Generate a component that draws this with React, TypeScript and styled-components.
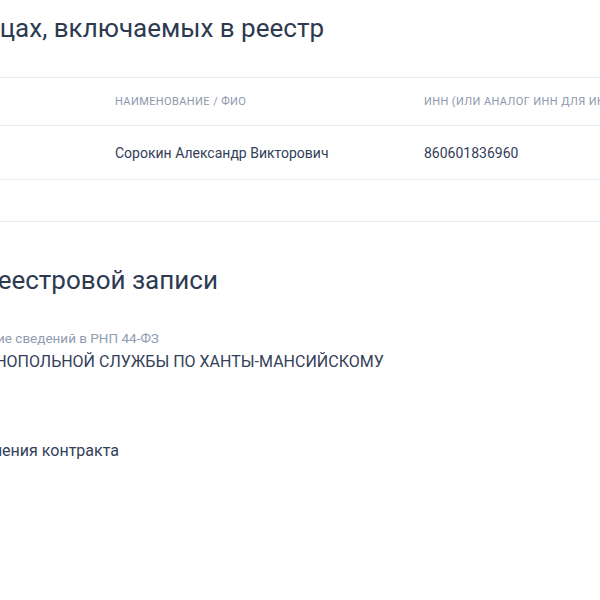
import React from "react";
import styled, { createGlobalStyle } from "styled-components";

const Global = createGlobalStyle`
  html, body { margin: 0; padding: 0; background: #ffffff; }
  body { overflow: hidden; width: 600px; height: 600px; font-family: Roboto, "Noto Sans", sans-serif; color: #334059; }
`;

const Viewport = styled.div`
  width: 600px;
  height: 600px;
  overflow: hidden;
`;

const Content = styled.main`
  width: 1240px;
  margin-left: -218px;
`;

const Section = styled.section<{ $divider?: boolean; $pt: number }>`
  padding-top: ${(p) => p.$pt}px;
  padding-bottom: ${(p) => (p.$divider ? "41px" : "0")};
  border-bottom: ${(p) => (p.$divider ? "1px solid #e8ebf2" : "none")};
`;

const Title = styled.h2<{ $mb: number }>`
  margin: 0 0 ${(p) => p.$mb}px;
  font-size: 26px;
  line-height: 32px;
  font-weight: 400;
  color: #2d3a50;
  white-space: nowrap;
`;

const Table = styled.div`
  border-top: 1px solid #e8ebf2;
`;

const Row = styled.div<{ $head?: boolean }>`
  display: grid;
  grid-template-columns: repeat(4, 309px);
  height: ${(p) => (p.$head ? "47px" : "53px")};
  align-items: center;
  border-bottom: 1px solid #e8ebf2;
`;

const HeadCell = styled.div`
  padding: 0 24px;
  font-size: 11px;
  line-height: 16px;
  letter-spacing: 0.4px;
  text-transform: uppercase;
  color: #8d98ad;
  white-space: nowrap;
`;

const Cell = styled.div`
  padding: 0 24px;
  font-size: 14px;
  line-height: 20px;
  color: #334059;
  white-space: nowrap;
`;

const Field = styled.div<{ $mt: number }>`
  margin-top: ${(p) => p.$mt}px;
  width: 640px;
`;

const Label = styled.div`
  font-size: 13.5px;
  line-height: 16px;
  color: #909cb2;
  margin-bottom: 4px;
`;

const Value = styled.div`
  font-size: 16px;
  line-height: 24px;
  color: #334059;
`;

export default function App() {
  return (
    <Viewport>
      <Global />
      <Content>
        <Section $divider $pt={12}>
          <Title $mb={33}>Информация о лицах, включаемых в реестр</Title>
          <Table>
            <Row $head>
              <HeadCell>Тип</HeadCell>
              <HeadCell>Наименование / ФИО</HeadCell>
              <HeadCell>ИНН (или аналог ИНН для иностранного лица)</HeadCell>
              <HeadCell>Адрес</HeadCell>
            </Row>
            <Row>
              <Cell>Физ. лицо</Cell>
              <Cell>Сорокин Александр Викторович</Cell>
              <Cell>860601836960</Cell>
              <Cell></Cell>
            </Row>
          </Table>
        </Section>
        <Section $pt={42}>
          <Title $mb={0}>Информация из реестровой записи</Title>
          <Field $mt={34}>
            <Label>Орган, осуществивший размещение сведений в РНП 44-ФЗ</Label>
            <Value>ТО ФЕДЕРАЛЬНОЙ АНТИМОНОПОЛЬНОЙ СЛУЖБЫ ПО ХАНТЫ-МАНСИЙСКОМУ АВТОНОМНОМУ ОКРУГУ</Value>
          </Field>
          <Field $mt={21}>
            <Label>Основание</Label>
            <Value>Уклонение фирмы от заключения контракта</Value>
          </Field>
        </Section>
      </Content>
    </Viewport>
  );
}
